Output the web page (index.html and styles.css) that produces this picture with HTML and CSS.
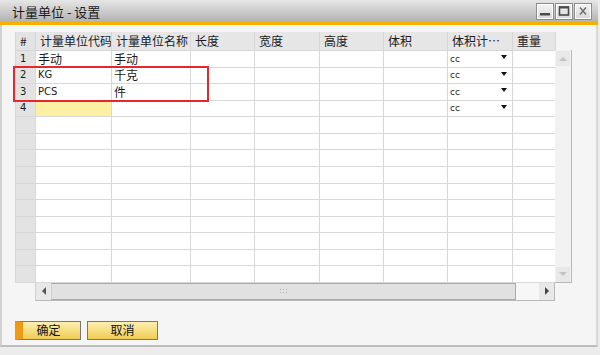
FILE: index.html
```html
<!DOCTYPE html>
<html lang="zh-CN">
<head>
    <meta charset="UTF-8">
    <title>计量单位 - 设置</title>
    <link rel="stylesheet" href="styles.css">
</head>
<body>
    <div class="window">
        <div class="titlebar">
            <span class="title">计量单位 - 设置</span>
            <div class="controls">
                <span class="ctl"><svg width="12" height="10" viewBox="0 0 12 10"><rect x="1" y="7" width="10" height="2.5" fill="#4a4a4a"/></svg></span>
                <span class="ctl"><svg width="12" height="10" viewBox="0 0 12 10"><rect x="1.5" y="1" width="9" height="8" fill="none" stroke="#4a4a4a" stroke-width="1.6"/><rect x="1" y="0.5" width="10" height="2" fill="#4a4a4a"/></svg></span>
                <span class="ctl"><svg width="12" height="10" viewBox="0 0 12 10"><path d="M3 1.5 L9 8.5 M9 1.5 L3 8.5" stroke="#6a6a6a" stroke-width="1.4"/></svg></span>
            </div>
        </div>

        <div class="content">
            <div class="grid">
                <table class="uom">
                    <colgroup>
                        <col style="width:20px">
                        <col style="width:76px">
                        <col style="width:79px">
                        <col style="width:64px">
                        <col style="width:65px">
                        <col style="width:64px">
                        <col style="width:64px">
                        <col style="width:65px">
                        <col style="width:43px">
                    </colgroup>
                    <thead>
                        <tr>
                            <th class="rowhead">#</th>
                            <th>计量单位代码</th>
                            <th>计量单位名称</th>
                            <th>长度</th>
                            <th>宽度</th>
                            <th>高度</th>
                            <th>体积</th>
                            <th>体积计…</th>
                            <th>重量</th>
                        </tr>
                    </thead>
                    <tbody id="rows"></tbody>
                </table>

                <div class="vscroll">
                    <span class="vbtn"><span class="tri tri-up"></span></span>
                    <span class="vbtn"><span class="tri tri-down"></span></span>
                </div>

                <div class="hscroll">
                    <span class="hbtn"><span class="tri tri-left"></span></span>
                    <span class="thumb"><span class="grip"></span></span>
                    <span class="htrack"></span>
                    <span class="hbtn"><span class="tri tri-right"></span></span>
                </div>

                <div class="highlight"></div>
            </div>

            <div class="actions">
                <button class="btn btn-ok">确定</button>
                <button class="btn btn-cancel">取消</button>
            </div>
        </div>
    </div>

    <script>
        const units = [
            { code: '手动', name: '手动' },
            { code: 'KG', name: '千克' },
            { code: 'PCS', name: '件' },
            { code: '', name: '', current: true }
        ];

        const tbody = document.getElementById('rows');
        for (let i = 0; i < 14; i++) {
            const tr = document.createElement('tr');
            const u = units[i];
            let html = '<td class="rowhead num">' + (u ? i + 1 : '') + '</td>';
            if (u) {
                const latin = /^[A-Z]/.test(u.code) ? ' latin' : '';
                html += '<td class="' + (u.current ? 'current' : '') + latin + '">' + u.code + '</td>';
                html += '<td>' + u.name + '</td>';
                html += '<td></td><td></td><td></td><td></td>';
                html += '<td><div class="combo"><span>cc</span><span class="arrow"></span></div></td>';
                html += '<td></td>';
            } else {
                html += '<td></td><td></td><td></td><td></td><td></td><td></td><td></td><td></td>';
            }
            tr.innerHTML = html;
            tbody.appendChild(tr);
        }
    </script>
</body>
</html>
```

FILE: styles.css
```css
body {
    margin: 0;
    background-color: #ececec;
    font-family: "Noto Sans CJK SC", sans-serif;
    color: #1b1b1b;
}

.window {
    width: 598px;
    height: 355px;
}

.titlebar {
    height: 22px;
    display: flex;
    align-items: center;
    justify-content: space-between;
    padding: 0 6px 0 12px;
    background: linear-gradient(#e6e6e6, #b2b2b2);
    border-bottom: 3px solid #f5b000;
}

.title {
    font-size: 13px;
    line-height: 1;
    color: #1a1a1a;
}

.controls {
    display: flex;
    gap: 1px;
}

.ctl {
    width: 16px;
    height: 15px;
    display: flex;
    align-items: center;
    justify-content: center;
    border: 1px solid #8c8c8c;
    background: linear-gradient(#f4f4f4, #d8d8d8);
    box-shadow: inset 0 0 0 1px #ffffff;
}

.content {
    height: 322px;
    box-sizing: border-box;
    padding: 7px 0 0 13px;
    background-color: #f5f5f5;
    border-left: 2px solid #d2d2d2;
    border-right: 2px solid #d8d8d8;
    border-bottom: 2px solid #bcbcbc;
}

.grid {
    position: relative;
    display: grid;
    grid-template-columns: 540px 17px;
    width: 557px;
}

.uom {
    grid-column: 1;
    grid-row: 1;
    width: 540px;
    table-layout: fixed;
    border-collapse: collapse;
    font-size: 12px;
}

.uom th {
    height: 18px;
    padding: 0 0 0 4px;
    text-align: left;
    font-weight: normal;
    background-color: #e6e6e6;
    border: 1px solid #d6d6d6;
    border-top: 0;
    white-space: nowrap;
    overflow: hidden;
    line-height: 16px;
}

.uom tbody tr {
    height: 16.57px;
}

.uom td {
    padding: 0 2px;
    border: 1px solid #d8d8d8;
    background-color: #ffffff;
    line-height: 14px;
    white-space: nowrap;
    overflow: hidden;
}

.uom .rowhead {
    background-color: #e3e3e3;
    padding-left: 4px;
}

.num, .latin {
    font-family: "DejaVu Sans", sans-serif;
    font-size: 10px;
}

.uom td.current {
    background-color: #fdf0a2;
}

.combo {
    display: flex;
    align-items: center;
    justify-content: space-between;
    padding-right: 3px;
    font-family: "DejaVu Sans", sans-serif;
    font-size: 9px;
}

.arrow {
    width: 0;
    height: 0;
    margin-top: -3px;
    border-left: 3.5px solid transparent;
    border-right: 3.5px solid transparent;
    border-top: 4px solid #111;
}

.vscroll {
    grid-column: 2;
    grid-row: 1;
    margin-top: 18px;
    display: flex;
    flex-direction: column;
    justify-content: space-between;
    background-color: #f2f2f2;
    border-right: 1px solid #b8b8b8;
    border-bottom: 1px solid #b8b8b8;
}

.vbtn {
    height: 15px;
    margin: 1px 1px 0 1px;
    display: flex;
    align-items: center;
    justify-content: center;
    background-color: #e8e8e8;
}

.vbtn:last-child {
    margin: 0 1px 0 1px;
}

.hscroll {
    grid-column: 1;
    grid-row: 2;
    margin-left: 20px;
    height: 17px;
    display: flex;
    background-color: #f7f7f7;
    border-right: 1px solid #b8b8b8;
    border-bottom: 1px solid #b8b8b8;
    border-left: 1px solid #d0d0d0;
}

.hbtn {
    width: 15px;
    display: flex;
    align-items: center;
    justify-content: center;
    background-color: #e8e8e8;
}

.thumb {
    flex: 1;
    display: flex;
    align-items: center;
    justify-content: center;
    background-color: #e1e1e1;
    border: 1px solid #a9a9a9;
    border-left-color: #d0d0d0;
}

.grip {
    width: 9px;
    height: 7px;
    background-image: radial-gradient(circle, #b4b4b4 0.8px, transparent 1px);
    background-size: 3px 3px;
}

.htrack {
    width: 23px;
}

.tri {
    width: 0;
    height: 0;
}

.tri-up {
    border-left: 4px solid transparent;
    border-right: 4px solid transparent;
    border-bottom: 4px solid #c4c4c4;
}

.tri-down {
    border-left: 4px solid transparent;
    border-right: 4px solid transparent;
    border-top: 4px solid #c4c4c4;
}

.tri-left {
    border-top: 4px solid transparent;
    border-bottom: 4px solid transparent;
    border-right: 4px solid #555;
}

.tri-right {
    border-top: 4px solid transparent;
    border-bottom: 4px solid transparent;
    border-left: 4px solid #444;
}

.highlight {
    position: absolute;
    left: -2px;
    top: 34px;
    width: 196px;
    height: 36px;
    box-sizing: border-box;
    border: 2px solid #e8262b;
}

.actions {
    display: flex;
    gap: 6px;
    margin-top: 20px;
}

.btn {
    height: 19px;
    padding: 0;
    font-family: "Noto Sans CJK SC", sans-serif;
    font-size: 12px;
    line-height: 1;
    color: #111;
    border: 1px solid #777;
    background: linear-gradient(#fcefb2, #f0cc52);
    cursor: pointer;
}

.btn-ok {
    width: 66px;
    border-left: 8px solid #f09a14;
    padding-right: 6px;
}

.btn-cancel {
    width: 71px;
}
```
